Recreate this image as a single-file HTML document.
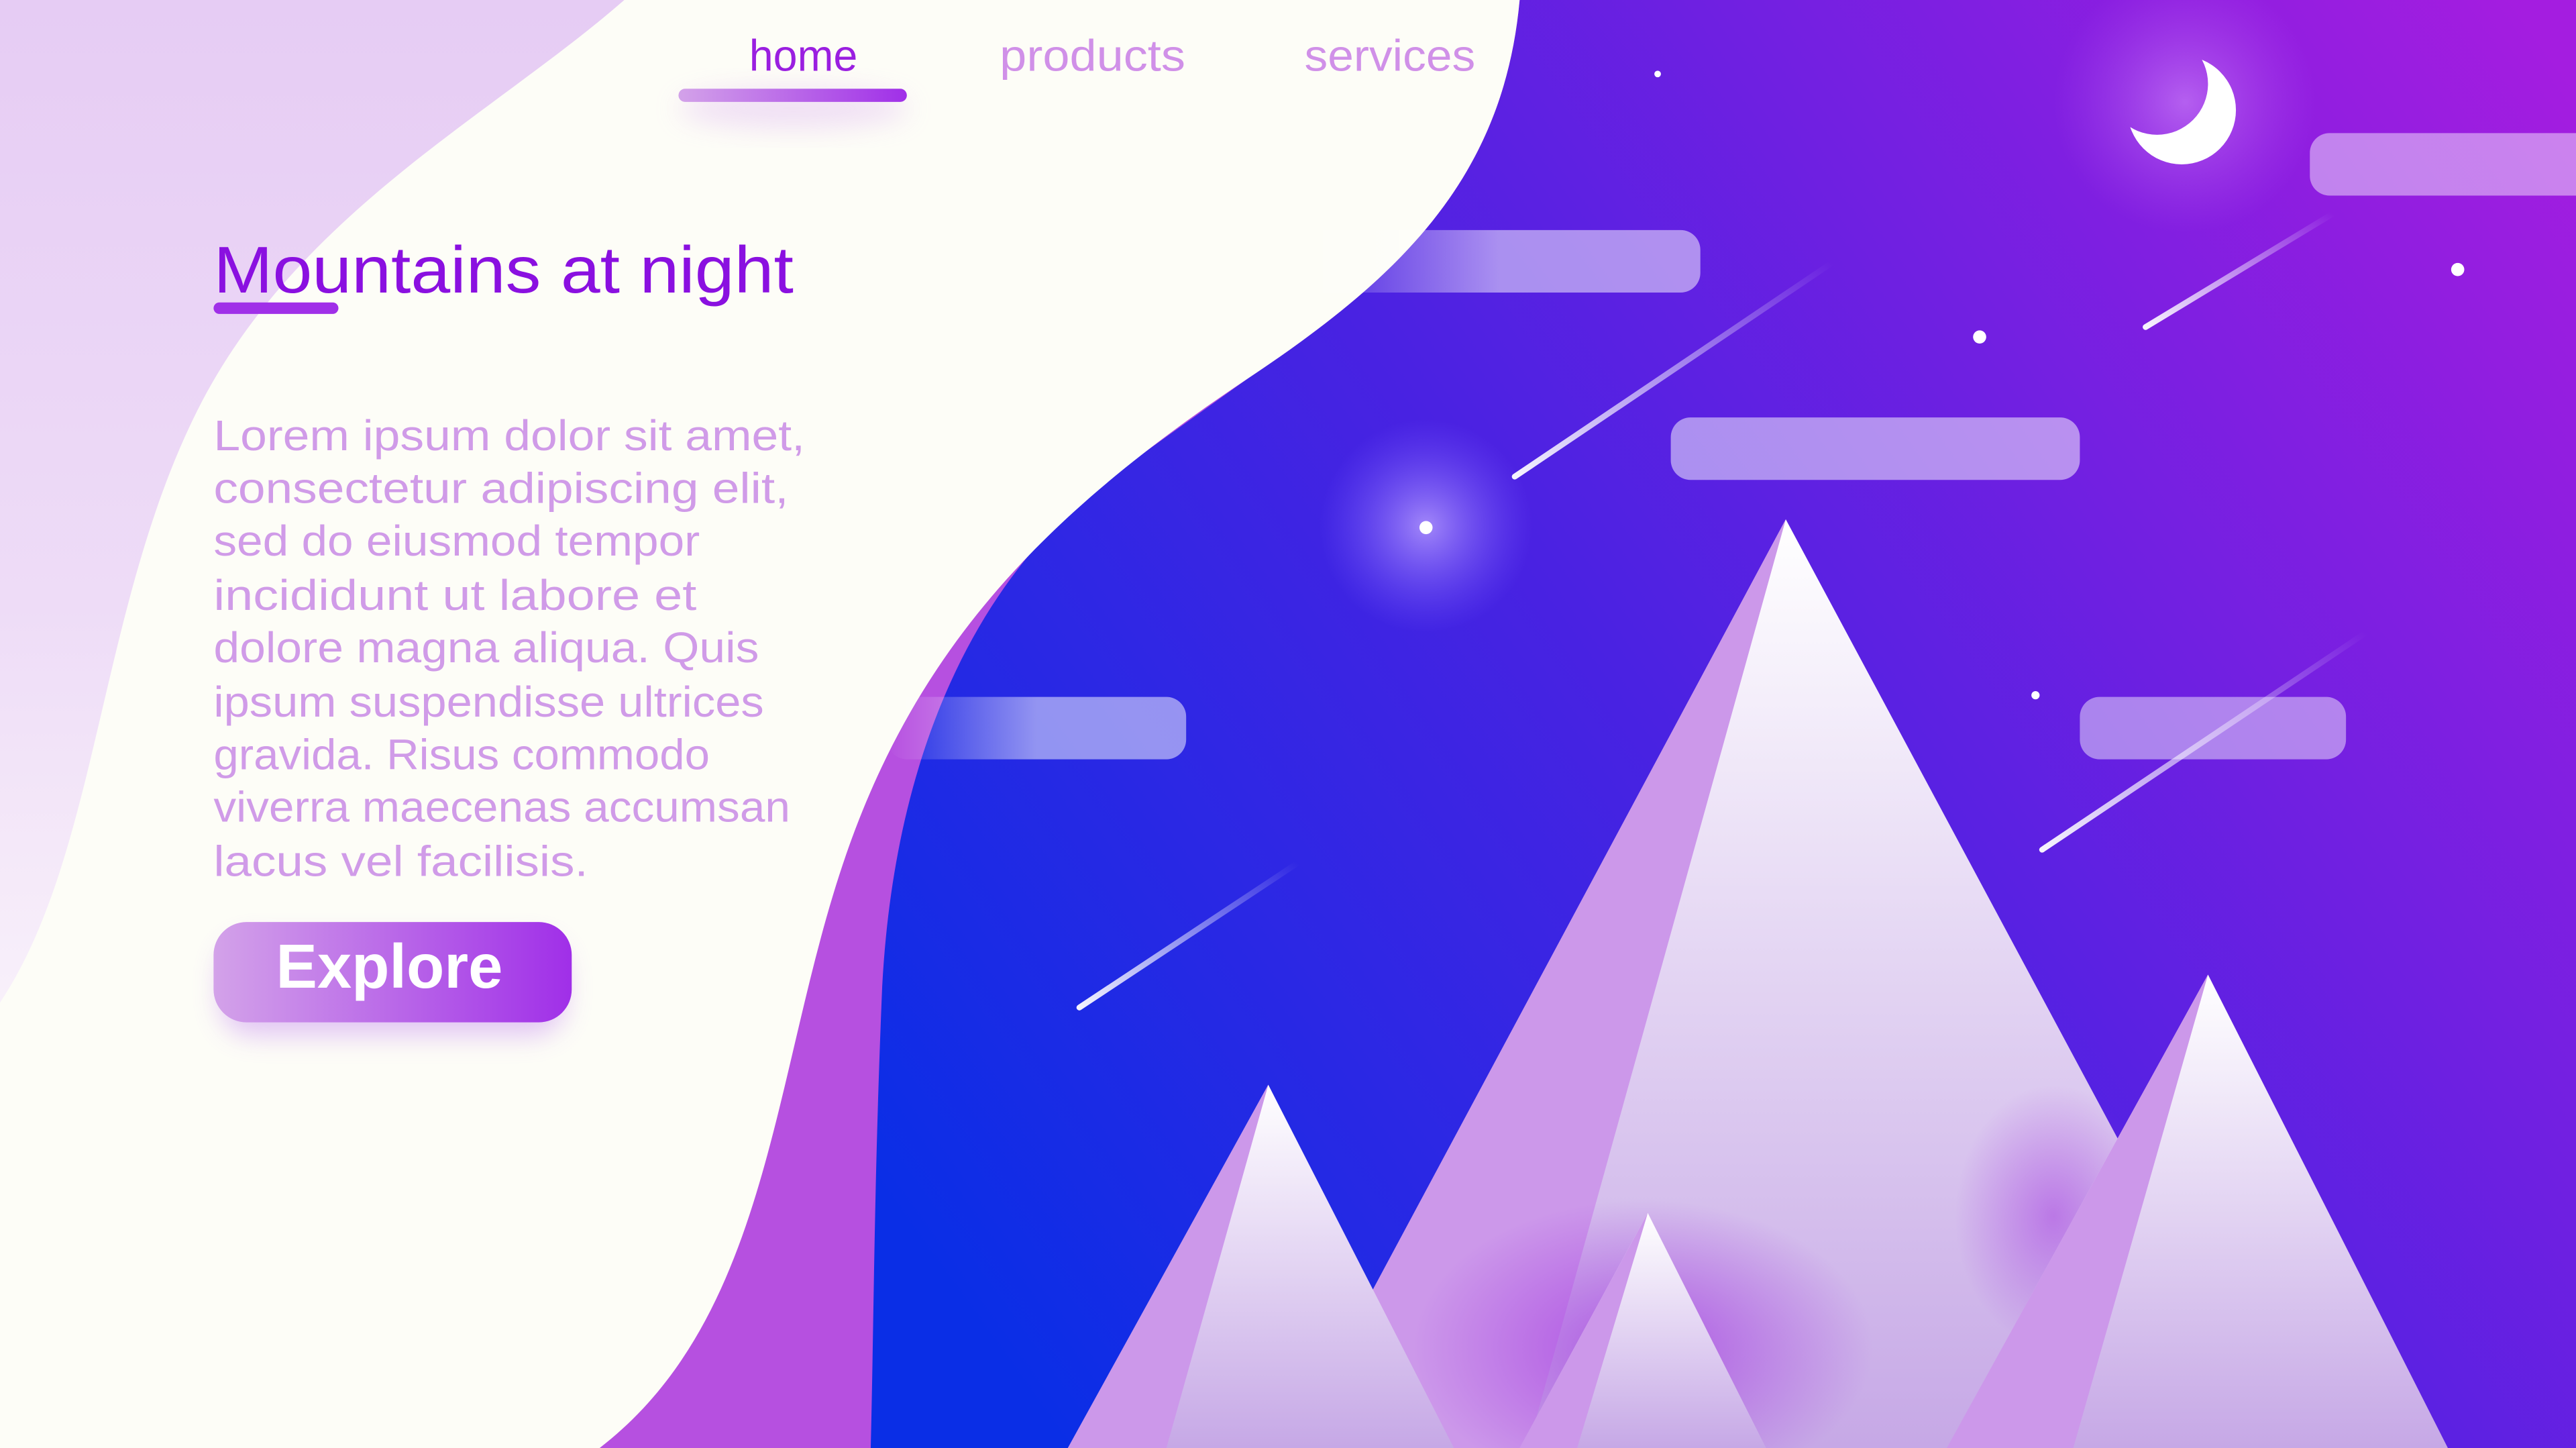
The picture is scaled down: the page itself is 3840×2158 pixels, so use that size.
<!DOCTYPE html>
<html><head><meta charset="utf-8"><style>
html,body{margin:0;padding:0;width:3840px;height:2158px;overflow:hidden;background:#fdfdf7}
svg{display:block;position:absolute;left:0;top:0}
text{font-family:"Liberation Sans","DejaVu Sans",sans-serif}
</style></head><body>
<svg width="3840" height="2158" viewBox="0 0 1568 881" preserveAspectRatio="none" xmlns="http://www.w3.org/2000/svg">
<defs>
<linearGradient id="sky" gradientUnits="userSpaceOnUse" x1="560" y1="760" x2="1560" y2="40">
<stop offset="0" stop-color="#0a2ee6"/><stop offset="0.45" stop-color="#4a22e2"/><stop offset="1" stop-color="#a41de0"/>
</linearGradient>
<linearGradient id="lil" x1="0" y1="0" x2="0" y2="1">
<stop offset="0" stop-color="#e6ccf4"/><stop offset="0.6" stop-color="#eedcf7"/><stop offset="1" stop-color="#f8f0fa"/>
</linearGradient>
<linearGradient id="face" x1="0" y1="0" x2="0" y2="1">
<stop offset="0" stop-color="#ffffff"/><stop offset="1" stop-color="#c6a8e6"/>
</linearGradient>
<linearGradient id="btn" x1="0" y1="0" x2="1" y2="0">
<stop offset="0" stop-color="#d3a2e9"/><stop offset="1" stop-color="#a02fe8"/>
</linearGradient>
<linearGradient id="cloudL" x1="0" y1="0" x2="1" y2="0">
<stop offset="0" stop-color="#fff" stop-opacity="0"/><stop offset="0.5" stop-color="#fff" stop-opacity="0.5"/><stop offset="1" stop-color="#fff" stop-opacity="0.5"/>
</linearGradient>
<linearGradient id="met" x1="0" y1="1" x2="1" y2="0">
<stop offset="0" stop-color="#fff" stop-opacity="0.95"/><stop offset="1" stop-color="#fff" stop-opacity="0"/>
</linearGradient>
<radialGradient id="glow"><stop offset="0" stop-color="#b9a0ff" stop-opacity="0.8"/><stop offset="1" stop-color="#7a5cff" stop-opacity="0"/></radialGradient>
<radialGradient id="pglow"><stop offset="0" stop-color="#a030e0" stop-opacity="0.7"/><stop offset="1" stop-color="#a030e0" stop-opacity="0"/></radialGradient>
<radialGradient id="moonglow"><stop offset="0" stop-color="#e0a0ff" stop-opacity="0.5"/><stop offset="1" stop-color="#c060f0" stop-opacity="0"/></radialGradient>
<mask id="moonmask"><rect width="1568" height="881" fill="#000"/><circle cx="1328" cy="67" r="33" fill="#fff"/><circle cx="1313" cy="51" r="31" fill="#000"/></mask>
<filter id="blur" x="-50%" y="-50%" width="200%" height="200%"><feGaussianBlur stdDeviation="8"/></filter>
</defs>
<rect width="1568" height="881" fill="url(#sky)"/>
<circle cx="868" cy="320" r="65" fill="url(#glow)"/>
<circle cx="1330" cy="62" r="80" fill="url(#moonglow)"/>
<path d="M925 0 L0 0 L0 881 L530 881 C532 800 532 720 537 600 C545 450 600 340 690 280 L760 230 C850 170 915 110 925 0 Z" fill="#b650e0"/>
<path d="M925 0 C915 110 850 170 760 230 C640 310 560 390 515 520 C470 650 470 800 365 881 L0 881 L0 0 Z" fill="#fdfdf7"/>
<path d="M380 0 C300 70 180 130 120 250 C60 370 60 520 0 610 L0 0 Z" fill="url(#lil)"/>
<rect x="790" y="140" width="245" height="38" rx="12" fill="url(#cloudL)"/>
<rect x="1017" y="254" width="249" height="38" rx="12" fill="#fff" fill-opacity="0.5"/>
<rect x="540" y="424" width="182" height="38" rx="12" fill="url(#cloudL)"/>
<rect x="1266" y="424" width="162" height="38" rx="12" fill="#fff" fill-opacity="0.45"/>
<rect x="1406" y="81" width="180" height="38" rx="12" fill="#fff" fill-opacity="0.45"/>
<g stroke-linecap="round" stroke-width="3.5">
<path d="M922 290 L1115 160" stroke="url(#met)"/>
<path d="M1306 199 L1420 130" stroke="url(#met)"/>
<path d="M657 613 L790 525" stroke="url(#met)"/>
<path d="M1243 517 L1440 385" stroke="url(#met)"/>
</g>
<g fill="#fff"><circle cx="868" cy="321" r="4"/><circle cx="1205" cy="205" r="4"/><circle cx="1496" cy="164" r="4"/><circle cx="1009" cy="45" r="2"/><circle cx="1239" cy="423" r="2.5"/></g>
<rect width="1568" height="881" fill="#fff" mask="url(#moonmask)"/>
<path d="M1087 316 L1390 881 L784 881 Z" fill="url(#face)"/>
<path d="M1087 316 L930 881 L784 881 Z" fill="#cc98ea"/>
<ellipse cx="1000" cy="820" rx="140" ry="90" fill="url(#pglow)"/>
<ellipse cx="1250" cy="740" rx="60" ry="80" fill="url(#pglow)" opacity="0.7"/>
<path d="M1344 593 L1490 881 L1185 881 Z" fill="url(#face)"/>
<path d="M1344 593 L1262 881 L1185 881 Z" fill="#cc98ea"/>
<path d="M772 660 L885 881 L650 881 Z" fill="url(#face)"/>
<path d="M772 660 L710 881 L650 881 Z" fill="#cc98ea"/>
<path d="M1003 738 L1075 881 L925 881 Z" fill="url(#face)"/>
<path d="M1003 738 L960 881 L925 881 Z" fill="#cc98ea"/>
<ellipse cx="483" cy="66" rx="70" ry="12" fill="#d8a8f0" opacity="0.35" filter="url(#blur)"/>
<text x="489" y="43" font-size="27" fill="#9a1fe0" text-anchor="middle" textLength="66" lengthAdjust="spacingAndGlyphs">home</text>
<rect x="413" y="54" width="139" height="8" rx="4" fill="url(#btn)"/>
<text x="665" y="43" font-size="27" fill="#d090e8" text-anchor="middle" textLength="113" lengthAdjust="spacingAndGlyphs">products</text>
<text x="846" y="43" font-size="27" fill="#d090e8" text-anchor="middle" textLength="104" lengthAdjust="spacingAndGlyphs">services</text>
<text x="130" y="178" font-size="40" fill="#8a10e0" textLength="353" lengthAdjust="spacingAndGlyphs">Mountains at night</text>
<rect x="130" y="184" width="76" height="7" rx="3.5" fill="#a030e8"/>
<g font-size="26" fill="#d09be8">
<text x="130" y="274" textLength="360" lengthAdjust="spacingAndGlyphs">Lorem ipsum dolor sit amet,</text>
<text x="130" y="306" textLength="350" lengthAdjust="spacingAndGlyphs">consectetur adipiscing elit,</text>
<text x="130" y="338" textLength="296" lengthAdjust="spacingAndGlyphs">sed do eiusmod tempor</text>
<text x="130" y="371" textLength="294" lengthAdjust="spacingAndGlyphs">incididunt ut labore et</text>
<text x="130" y="403" textLength="332" lengthAdjust="spacingAndGlyphs">dolore magna aliqua. Quis</text>
<text x="130" y="436" textLength="335" lengthAdjust="spacingAndGlyphs">ipsum suspendisse ultrices</text>
<text x="130" y="468" textLength="302" lengthAdjust="spacingAndGlyphs">gravida. Risus commodo</text>
<text x="130" y="500" textLength="351" lengthAdjust="spacingAndGlyphs">viverra maecenas accumsan</text>
<text x="130" y="533" textLength="228" lengthAdjust="spacingAndGlyphs">lacus vel facilisis.</text>
</g>
<rect x="134" y="572" width="210" height="58" rx="20" fill="#c080f0" opacity="0.45" filter="url(#blur)"/>
<rect x="130" y="561" width="218" height="61" rx="20" fill="url(#btn)"/>
<text x="237" y="601" font-size="38" fill="#fff" text-anchor="middle" font-weight="bold" textLength="138" lengthAdjust="spacingAndGlyphs">Explore</text>
</svg>
</body></html>
